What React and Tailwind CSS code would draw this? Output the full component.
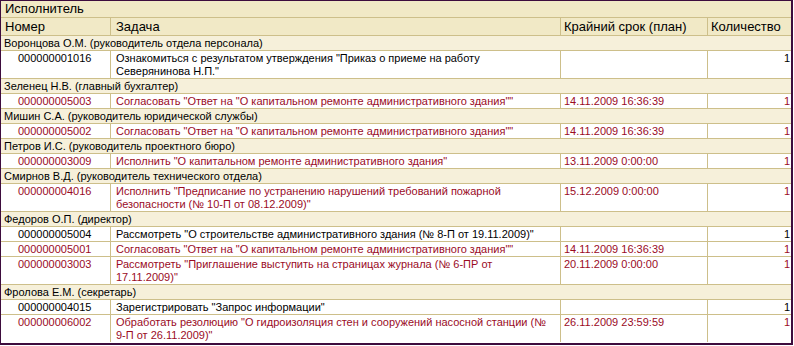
const RED = "text-[#9a0b1f]";
const BLK = "text-[#000000]";

const data = [
  {
    group: "Воронцова О.М. (руководитель отдела персонала)",
    rows: [
      { n: "000000001016", t: ["Ознакомиться с результатом утверждения \"Приказ о приеме на работу", "Северянинова Н.П.\""], d: "", red: false },
    ],
  },
  {
    group: "Зеленец Н.В. (главный бухгалтер)",
    rows: [
      { n: "000000005003", t: ["Согласовать \"Ответ на \"О капитальном ремонте административного здания\"\""], d: "14.11.2009 16:36:39", red: true },
    ],
  },
  {
    group: "Мишин С.А. (руководитель юридической службы)",
    rows: [
      { n: "000000005002", t: ["Согласовать \"Ответ на \"О капитальном ремонте административного здания\"\""], d: "14.11.2009 16:36:39", red: true },
    ],
  },
  {
    group: "Петров И.С. (руководитель проектного бюро)",
    rows: [
      { n: "000000003009", t: ["Исполнить \"О капитальном ремонте административного здания\""], d: "13.11.2009 0:00:00", red: true },
    ],
  },
  {
    group: "Смирнов В.Д. (руководитель технического отдела)",
    rows: [
      { n: "000000004016", t: ["Исполнить \"Предписание по устранению нарушений требований пожарной", "безопасности (№ 10-П от 08.12.2009)\""], d: "15.12.2009 0:00:00", red: true },
    ],
  },
  {
    group: "Федоров О.П. (директор)",
    rows: [
      { n: "000000005004", t: ["Рассмотреть \"О строительстве административного здания (№ 8-П от 19.11.2009)\""], d: "", red: false },
      { n: "000000005001", t: ["Согласовать \"Ответ на \"О капитальном ремонте административного здания\"\""], d: "14.11.2009 16:36:39", red: true },
      { n: "000000003003", t: ["Рассмотреть \"Приглашение выступить на страницах журнала (№ 6-ПР от", "17.11.2009)\""], d: "20.11.2009 0:00:00", red: true },
    ],
  },
  {
    group: "Фролова Е.М. (секретарь)",
    rows: [
      { n: "000000004015", t: ["Зарегистрировать \"Запрос информации\""], d: "", red: false },
      { n: "000000006002", t: ["Обработать резолюцию \"О гидроизоляция стен и сооружений насосной станции (№", "9-П от 26.11.2009)\""], d: "26.11.2009 23:59:59", red: true },
    ],
  },
];

function DataRow({ r, last }) {
  const c = r.red ? RED : BLK;
  const h = r.t.length > 1 ? "h-[27px]" : "h-[14px]";
  return (
    <div className={`grid grid-cols-[109px_450px_147px_84px] bg-white ${c} ${last ? "" : "border-b border-[#cdbf8a]"}`}>
      <div className={`${h} pt-[1px] pl-[17px] whitespace-nowrap overflow-hidden`}>{r.n}</div>
      <div className={`${h} pt-[1px] pl-[5px] border-l border-[#cdbf8a] whitespace-nowrap overflow-hidden`}>
        {r.t.map((l, i) => (
          <div key={i}>{l}</div>
        ))}
      </div>
      <div className={`${h} pt-[1px] pl-[3px] border-l border-[#cdbf8a] whitespace-nowrap overflow-hidden`}>{r.d}</div>
      <div className={`${h} pt-[1px] pr-[1px] border-l border-[#cdbf8a] text-right`}>1</div>
    </div>
  );
}

export default function App() {
  return (
    <div className="bg-white w-[794px] h-[346px]">
      <div
        className="w-[793px] h-[345px] border-l border-t border-r-2 border-b-2 border-[#3d0c3d] bg-white overflow-hidden text-[11px] leading-[13px]"
        style={{ fontFamily: '"Liberation Sans", Arial, sans-serif' }}
      >
        <div className="h-[17px] bg-[#f1e9c6] border-b border-[#cdbf8a] pl-[4px] text-[13px] leading-[16px] text-black">
          Исполнитель
        </div>
        <div className="grid grid-cols-[109px_450px_147px_84px] h-[18px] bg-[#f1e9c6] border-b border-[#cdbf8a] text-[13px] leading-[16px] text-black">
          <div className="pl-[4px] pt-[1px]">Номер</div>
          <div className="pl-[5px] pt-[1px] border-l border-[#cdbf8a]">Задача</div>
          <div className="pl-[3px] pt-[1px] border-l border-[#cdbf8a]">Крайний срок (план)</div>
          <div className="pl-[3px] pt-[1px] border-l border-[#cdbf8a]">Количество</div>
        </div>
        {data.map((g, gi) => (
          <div key={gi}>
            <div className="h-[15px] pt-[1px] pl-[3px] bg-[#f6f0da] border-b border-[#cdbf8a] text-black whitespace-nowrap">
              {g.group}
            </div>
            {g.rows.map((r, ri) => (
              <DataRow key={ri} r={r} last={gi === data.length - 1 && ri === g.rows.length - 1} />
            ))}
          </div>
        ))}
      </div>
    </div>
  );
}
